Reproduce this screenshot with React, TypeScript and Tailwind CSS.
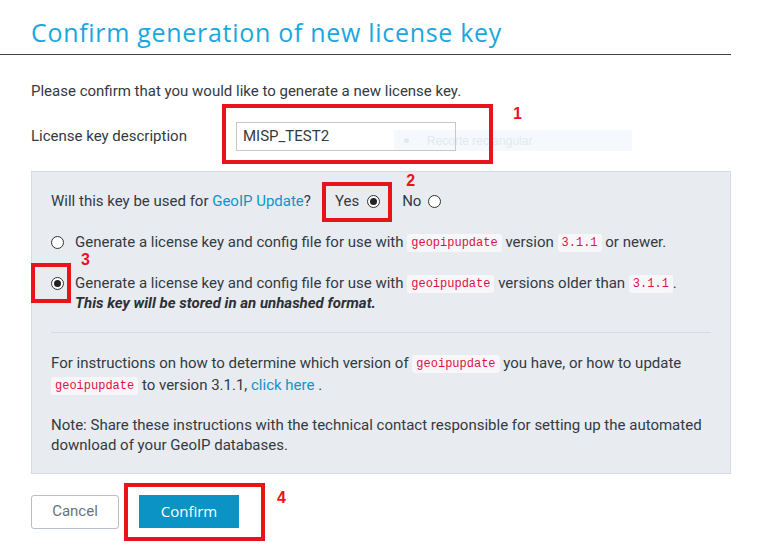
import React from "react";

const Code = ({ children }: { children: React.ReactNode }) => (
  <code className="inline-block rounded-[3px] bg-[#f7f7f9] px-[4px] py-[1px] align-middle font-['Liberation_Mono',monospace] text-[12px] leading-[16px] text-[#dd1144]">
    {children}
  </code>
);

const Radio = ({ checked }: { checked?: boolean }) => (
  <span className="inline-flex h-[13px] w-[13px] shrink-0 items-center justify-center rounded-full border border-[#333] bg-white">
    {checked && <span className="h-[7px] w-[7px] rounded-full bg-[#222]" />}
  </span>
);

const Mark = ({ n }: { n: string }) => (
  <span className="absolute font-['Liberation_Sans',sans-serif] text-[16px] font-bold leading-none text-[#e8141c]">
    {n}
  </span>
);

export default function App() {
  return (
    <div className="min-h-[553px] w-[761px] bg-white font-['Roboto',sans-serif] text-[15px] text-[#333a42]">
      {/* header */}
      <div className="w-[731px] border-b border-[#3c4650] pb-[8px] pl-[31px] pt-[18px]">
        <h1 className="font-['Open_Sans',sans-serif] text-[25px] leading-[28px] tracking-[0.7px] text-[#1aa7e0]">
          Confirm generation of new license key
        </h1>
      </div>

      <div className="px-[31px]">
        <p className="mt-[26px] leading-[20px]">
          Please confirm that you would like to generate a new license key.
        </p>

        {/* description */}
        <div className="relative mt-[5px] flex h-[60px] items-center">
          <span className="w-[205px]">License key description</span>
          <div className="relative">
            <input
              readOnly
              value="MISP_TEST2"
              className="h-[29px] w-[220px] border border-[#c8c8c8] px-[6px] text-[15px] text-[#333a42] outline-none"
            />
            <div className="pointer-events-none absolute -bottom-[13px] -left-[14px] -right-[37px] -top-[18px] border-[4px] border-[#e8141c]" />
          </div>
          <div className="pointer-events-none ml-[-62px] mt-[9px] flex h-[21px] w-[238px] items-center bg-[#f3f8fc]/80 font-['Liberation_Sans',sans-serif] text-[12px] text-[#e4e8ee]">
            <span className="ml-[10px] mr-[18px] h-[5px] w-[5px] rounded-full bg-[#e2e8ef]" />
            Recorte rectangular
          </div>
          <span className="absolute left-[482px] top-[0px]">
            <Mark n="1" />
          </span>
        </div>

        {/* panel */}
        <div className="mt-[5px] w-[700px] border border-[#d4dae2] bg-[#e8ebf0] px-[19px] pb-[18px] pt-[12px]">
          <div className="flex h-[34px] items-center">
            <span>
              Will this key be used for <span className="text-[#1393c8]">GeoIP Update</span>?
            </span>
            <div className="relative ml-[17px] flex items-center gap-[8px] px-[7px]">
              <span>Yes</span>
              <Radio checked />
              <div className="pointer-events-none absolute -bottom-[10px] -left-[6px] -right-[5px] -top-[8px] border-[4px] border-[#e8141c]" />
              <span className="absolute -right-[19px] -top-[17px]">
                <Mark n="2" />
              </span>
            </div>
            <div className="ml-[15px] flex items-center gap-[7px]">
              <span>No</span>
              <Radio />
            </div>
          </div>

          <div className="mt-[13px] flex items-center">
            <span className="mr-[11px] flex w-[13px]">
              <Radio />
            </span>
            <span>
              Generate a license key and config file for use with <Code>geopipupdate</Code> version{" "}
              <Code>3.1.1</Code> or newer.
            </span>
          </div>

          <div className="mt-[19px] flex items-start">
            <span className="relative mr-[11px] mt-[4px] flex w-[13px]">
              <Radio checked />
              <div className="pointer-events-none absolute -bottom-[13px] -left-[20px] -right-[7px] -top-[14px] border-[4px] border-[#e8141c]" />
              <span className="absolute left-[30px] -top-[25px]">
                <Mark n="3" />
              </span>
            </span>
            <div className="leading-[20px]">
              <div>
                Generate a license key and config file for use with <Code>geoipupdate</Code> versions older than{" "}
                <Code>3.1.1</Code>.
              </div>
              <div className="font-bold italic text-[#2b3138]">This key will be stored in an unhashed format.</div>
            </div>
          </div>

          <div className="mt-[19px] border-t border-[#d5dae0]" />

          <p className="mt-[19px] leading-[22px]">
            For instructions on how to determine which version of <Code>geoipupdate</Code> you have, or how to update{" "}
            <Code>geoipupdate</Code> to version 3.1.1, <span className="text-[#1393c8]">click here</span> .
          </p>

          <p className="mt-[19px] leading-[20px]">
            Note: Share these instructions with the technical contact responsible for setting up the automated
            download of your GeoIP databases.
          </p>
        </div>

        {/* buttons */}
        <div className="mt-[21px] flex items-center">
          <button className="h-[34px] w-[88px] rounded-[3px] border border-[#b8bec5] bg-white text-[15px] text-[#6b7178]">
            Cancel
          </button>
          <div className="relative ml-[20px]">
            <button className="h-[33px] w-[100px] bg-[#0b93c6] font-['Open_Sans',sans-serif] text-[15px] text-white">
              Confirm
            </button>
            <div className="pointer-events-none absolute -bottom-[13px] -left-[15px] -right-[26px] -top-[12px] border-[4px] border-[#e8141c]" />
            <span className="absolute left-[138px] -top-[5px]">
              <Mark n="4" />
            </span>
          </div>
        </div>
      </div>
    </div>
  );
}
